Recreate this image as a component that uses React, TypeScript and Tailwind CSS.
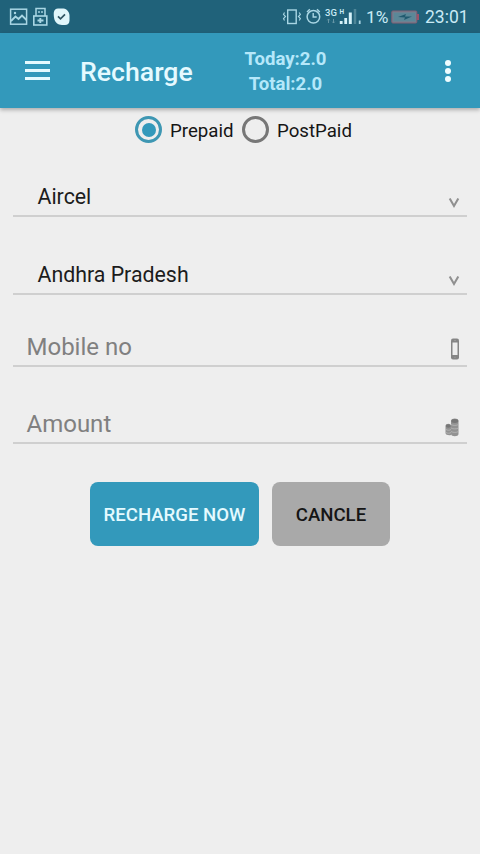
import React from "react";

function StatusBar() {
  return (
    <div className="flex h-[33px] items-center bg-[#20627a] text-[#c9eaf5]">
      <svg className="ml-[9px]" width="66" height="33" viewBox="0 0 66 33" fill="none">
        <rect x="1.6" y="9.2" width="16" height="15" stroke="#a9d6e4" strokeWidth="1.5" />
        <path d="M2 21l4.500-4.500 3 2.500 3.500-3.500 4.500 4.500" stroke="#a9d6e4" strokeWidth="1.800" />
        <circle cx="6" cy="13" r="1.200" fill="#a9d6e4" />
        <path d="M27 16V8.500h9V16" stroke="#a9d6e4" strokeWidth="1.500" />
        <path d="M30 11v2M33 11v2" stroke="#a9d6e4" strokeWidth="1.400" />
        <rect x="24.800" y="16" width="13" height="9" stroke="#a9d6e4" strokeWidth="1.600" />
        <path d="M31.300 18v5M28.500 20.500h6" stroke="#a9d6e4" strokeWidth="1.900" />
        <path d="M49 8.500H54.500C58 9 60.500 12 60.500 15.500V20.500C60.500 23.500 58.500 25 56 25H53C49 24.800 46 22.500 45.200 18.500C44.800 16.500 44.600 14 44.800 12.500C45.200 10 46.800 8.500 49 8.500Z" fill="#e0f6fb" />
        <path d="M49 16.300l2.500 2.500 4.500-4.500" stroke="#315563" strokeWidth="1.700" />
      </svg>
      <svg className="ml-[207px]" width="82" height="33" viewBox="0 0 82 33" fill="none">
        <rect x="5.700" y="10" width="8.500" height="13.500" stroke="#a9d6e4" strokeWidth="1.400" />
        <path d="M2.500 12.500l-1 2 2 2-2 2 1 2M17.200 12.500l1.200 2-2 2 2 2-1.200 2" stroke="#a9d6e4" strokeWidth="1.100" />
        <circle cx="31.400" cy="16.800" r="6.300" stroke="#a9d6e4" strokeWidth="1.500" />
        <path d="M31.200 13v4h3.500M25 12l2.800-2.700M37.800 12L35 9.300" stroke="#a9d6e4" strokeWidth="1.400" />
        <text x="43" y="16.300" fill="#c9eaf5" fontFamily="Roboto, sans-serif" fontSize="9.500" fontWeight="500">3G</text>
        <text x="57.500" y="14.300" fill="#c9eaf5" fontFamily="Roboto, sans-serif" fontSize="6.500" fontWeight="700">H</text>
        <path d="M46.500 23v-4m-1.200 1.300l1.200-1.300 1.200 1.300M51.500 19v4m-1.200-1.300l1.200 1.300 1.200-1.300" stroke="#6696a6" strokeWidth="1" />
        <path d="M59.200 24v-3M63.700 24v-6" stroke="#d5f2f9" strokeWidth="2.800" />
        <path d="M68.300 24V12.500" stroke="#d5f2f9" strokeWidth="3" />
        <path d="M73 24V9" stroke="#4e8698" strokeWidth="2.500" />
        <path d="M77.700 24v-3.500" stroke="#a9d6e4" strokeWidth="1.800" />
      </svg>
      <span className="ml-[2px] w-[24px] text-[17.300px] leading-[34px] whitespace-nowrap">1%</span>
      <svg className="ml-[1px]" width="28" height="33" viewBox="0 0 28 33">
        <rect x=".8" y="11" width="25" height="12" rx="1" fill="#6e8292" stroke="#865e72" strokeWidth="1" />
        <rect x="26" y="14" width="2" height="6" fill="#9b5369" />
        <rect x="3" y="13" width="21" height="8" fill="#5b8898" />
        <path d="M7 17l8-3-1 2.500h7L13 20l1-2.500z" fill="#205a6f" />
      </svg>
      <span className="ml-[6px] text-[17.500px] leading-[34px]">23:01</span>
    </div>
  );
}

function Header() {
  return (
    <header className="flex h-[75px] items-center bg-[#3399bb] shadow-[0_2px_4px_rgba(0,0,0,0.28)]">
      <button className="ml-[25px] flex w-[25px] flex-col gap-[5px]" aria-label="Menu">
        <span className="h-[3px] w-full bg-[#e5faff]" />
        <span className="h-[3px] w-full bg-[#e5faff]" />
        <span className="h-[3px] w-full bg-[#e5faff]" />
      </button>
      <h1 className="ml-[30px] w-[115px] pt-[3px] text-[26.670px] leading-[32px] font-medium text-[#e5faff]">Recharge</h1>
      <div className="ml-[41px] w-[99px] pt-[2px] text-center text-[18.600px] leading-[25px] font-bold text-[#b5e8fa]">
        <p>Today:2.0</p>
        <p>Total:2.0</p>
      </div>
      <button className="ml-[110px] flex flex-col gap-[2px]" aria-label="More options">
        <span className="size-[6px] rounded-full bg-[#effcff]" />
        <span className="size-[6px] rounded-full bg-[#effcff]" />
        <span className="size-[6px] rounded-full bg-[#effcff]" />
      </button>
    </header>
  );
}

function Chevron() {
  return (
    <svg width="12" height="12" viewBox="0 0 12 12" fill="none">
      <path d="M1.700 1.500L6 9l4.300-7.500" stroke="#909090" strokeWidth="2.100" />
    </svg>
  );
}

function PhoneIcon() {
  return (
    <svg width="10" height="22" viewBox="0 0 10 22">
      <rect x="1" y=".5" width="8" height="21" rx="2" fill="#858585" />
      <rect x="2.500" y="4.500" width="5" height="12.500" fill="#eee" />
      <path d="M4 2.500h2M4.200 19.300h1.600" stroke="#999" strokeWidth="1" />
    </svg>
  );
}

function CoinsIcon() {
  return (
    <svg width="15" height="19" viewBox="0 0 15 19">
      <path d="M6 3c0-3.300 7.500-3.300 7.500 0v13c0 3-7.500 3-7.500 0z" fill="#929292" />
      <path d="M.5 8c0-3 5.500-3 5.500 0v9c-2 .7-5.500 0-5.500-2z" fill="#929292" />
      <ellipse cx="9.800" cy="3" rx="3.500" ry="1.900" fill="#777" />
      <ellipse cx="3.300" cy="8" rx="2.500" ry="1.800" fill="#777" />
      <path d="M6 6.500c2 1.200 5.500 1.200 7.500 0M6 10c2 1.200 5.500 1.200 7.500 0M6 13.500c2 1.200 5.500 1.200 7.500 0M1 11.500c1.500 1 3.500 1 5 0M1 14.500c1.500 1 3.500 1 5 0" stroke="#b9b9b9" strokeWidth=".8" fill="none" />
    </svg>
  );
}

export default function App() {
  return (
    <div className="h-[854px] w-[480px] overflow-hidden bg-[#eeeeee] font-['Roboto',sans-serif] text-[#1c1c1c]">
      <StatusBar />
      <Header />
      <main className="px-[13px]">
        <div className="flex h-[43px] items-center pl-[122px] text-[18.670px] text-[#151515]">
          <span className="flex size-[27px] items-center justify-center rounded-full border-3 border-[#3e97b3]">
            <span className="size-[14px] rounded-full bg-[#3399bb]" />
          </span>
          <span className="ml-[8px] w-[65px] pt-[2px]">Prepaid</span>
          <span className="ml-[7px] size-[27px] rounded-full border-3 border-[#777]" />
          <span className="ml-[8px] pt-[2px]">PostPaid</span>
        </div>
        <div className="flex h-[66px] items-end justify-between border-b-2 border-[#cfcfcf] pr-[7px] pb-[6px] pl-[24.500px] text-[21.330px]">
          <span className="-mb-[1px] leading-[26px]">Aircel</span>
          <Chevron />
        </div>
        <div className="flex h-[78px] items-end justify-between border-b-2 border-[#cfcfcf] pr-[7px] pb-[6px] pl-[24.500px] text-[21.330px]">
          <span className="-mb-[1px] leading-[26px]">Andhra Pradesh</span>
          <Chevron />
        </div>
        <div className="flex h-[72px] items-end justify-between border-b-2 border-[#cfcfcf] pr-[7px] pb-[5px] pl-[13.500px] text-[24px] text-[#808080]">
          <span className="-mb-[1px] leading-[28px]">Mobile no</span>
          <PhoneIcon />
        </div>
        <div className="flex h-[77px] items-end justify-between border-b-2 border-[#cfcfcf] pr-[7px] pb-[5px] pl-[13.500px] text-[24px] text-[#808080]">
          <span className="-mb-[1px] leading-[28px]">Amount</span>
          <CoinsIcon />
        </div>
        <div className="mt-[38px] ml-[77px] flex gap-[13px] text-[18.600px] font-medium">
          <button className="h-[64px] w-[169px] rounded-[8px] bg-[#3399bb] pt-[3px] whitespace-nowrap text-[#e5faff]">RECHARGE NOW</button>
          <button className="h-[64px] w-[118px] rounded-[8px] bg-[#a9a9a9] pt-[3px] text-[#151515]">CANCLE</button>
        </div>
      </main>
    </div>
  );
}
